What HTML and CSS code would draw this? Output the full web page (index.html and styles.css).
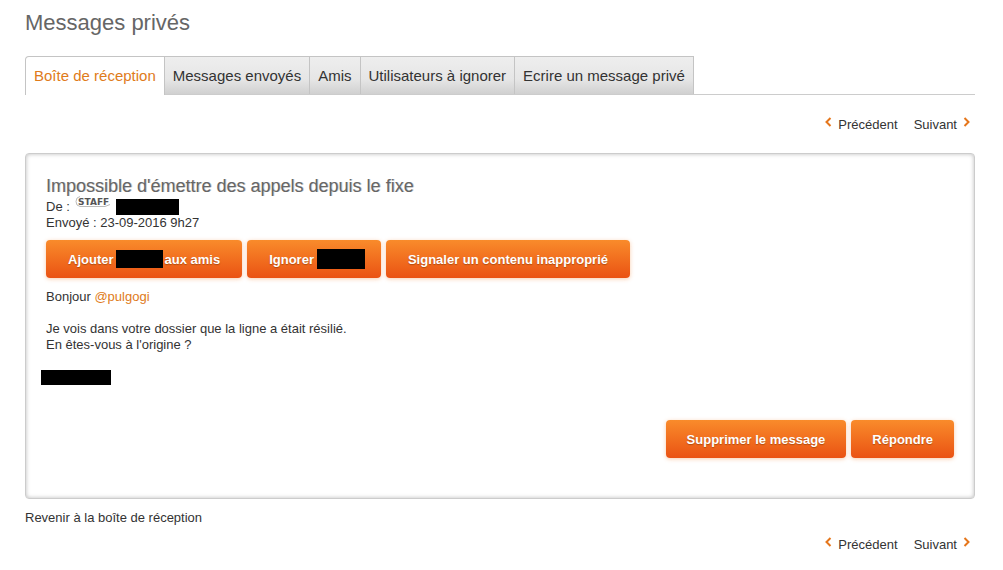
FILE: index.html
```html
<!DOCTYPE html>
<html lang="fr">

<head>
    <meta charset="UTF-8">
    <meta name="viewport" content="width=device-width, initial-scale=1.0">
    <title>Messages privés</title>
    <link rel="stylesheet" href="styles.css">
</head>

<body>
    <h1>Messages privés</h1>
    <nav class="tabs">
        <a class="tab active" href="#inbox">Boîte de réception</a>
        <a class="tab" href="#sent">Messages envoyés</a>
        <a class="tab" href="#friends">Amis</a>
        <a class="tab" href="#ignored">Utilisateurs à ignorer</a>
        <a class="tab" href="#compose">Ecrire un message privé</a>
    </nav>

    <div class="pager">
        <a href="#previous">
            <svg class="chevron" viewBox="0 0 8 10"><path d="M6.500 1 2.500 5l4 4" /></svg>
            Précédent
        </a>
        <a href="#next">
            Suivant
            <svg class="chevron" viewBox="0 0 8 10"><path d="m1.500 1 4 4-4 4" /></svg>
        </a>
    </div>

    <main class="message">
        <h2>Impossible d'émettre des appels depuis le fixe</h2>
        <div class="meta author">
            <span>De :</span>
            <svg class="staff" viewBox="0 0 36 14">
                <path class="staff-outline" d="M5 1.500Q1 2 1 6.500T5 11.500H30L35 9.500" />
                <text x="3" y="10">STAFF</text>
            </svg>
            <span class="mask mask-author"></span>
        </div>
        <div class="meta">Envoyé : 23-09-2016 9h27</div>

        <div class="actions">
            <button type="button">Ajouter<span class="mask mask-friend"></span>aux amis</button>
            <button type="button" class="ignore">Ignorer<span class="mask mask-ignore"></span></button>
            <button type="button">Signaler un contenu inapproprié</button>
        </div>

        <div class="content">
            <p>Bonjour <a href="#pulgogi">@pulgogi</a></p>
            <p>Je vois dans votre dossier que la ligne a était résilié.<br>En êtes-vous à l'origine ?</p>
            <span class="mask mask-signature"></span>
        </div>

        <div class="actions reply">
            <button type="button">Supprimer le message</button>
            <button type="button">Répondre</button>
        </div>
    </main>

    <a class="back" href="#inbox">Revenir à la boîte de réception</a>

    <div class="pager pager-bottom">
        <a href="#previous">
            <svg class="chevron" viewBox="0 0 8 10"><path d="M6.500 1 2.500 5l4 4" /></svg>
            Précédent
        </a>
        <a href="#next">
            Suivant
            <svg class="chevron" viewBox="0 0 8 10"><path d="m1.500 1 4 4-4 4" /></svg>
        </a>
    </div>
</body>

</html>
```
FILE: styles.css
```css
* {
    box-sizing: border-box;
}

body {
    margin: 0;
    padding: 8px 28px 8px 25px;
    background: #fff;
    color: #333;
    font-family: "Liberation Sans", Arial, sans-serif;
    font-size: 13px;
    line-height: 16px;
}

a {
    color: #333;
    text-decoration: none;
}

h1 {
    margin: 0 0 18px;
    color: #666;
    font-size: 22px;
    font-weight: normal;
    line-height: 30px;
}

.tabs {
    display: flex;
    border-bottom: 1px solid #ccc;
}

.tab {
    padding: 9px 8px 8px;
    border: 1px solid #c4c4c4;
    border-left-width: 0;
    border-bottom: 0;
    background: linear-gradient(#eee, #e6e6e6 60%, #d0d0d0);
    font-size: 15px;
    line-height: 20px;
}

.tab.active {
    margin-bottom: -1px;
    border-left-width: 1px;
    border-top-left-radius: 4px;
    background: #fff;
    color: #e07b1a;
}

.pager {
    display: flex;
    justify-content: flex-end;
    gap: 16px;
    padding: 22px 4px 20px;
}

.pager a {
    display: flex;
    gap: 6px;
}

.chevron {
    width: 8px;
    height: 10px;
    fill: none;
    stroke: #e5761b;
    stroke-width: 2;
}

.message {
    padding: 20px 20px 40px;
    border: 1px solid #ccc;
    border-radius: 4px;
    box-shadow: inset 0 0 4px #bbb;
}

h2 {
    margin: 0;
    color: #666;
    font-size: 18px;
    font-weight: normal;
    line-height: 25px;
    text-shadow: 1px 0 rgba(102, 102, 102, 0.3);
}

.author {
    display: flex;
    align-items: center;
    gap: 5px;
}

.staff {
    width: 36px;
    height: 14px;
    margin-top: -10px;
}

.staff-outline {
    fill: none;
    stroke: #bbb;
}

.staff text {
    fill: #555;
    font-family: "DejaVu Sans", sans-serif;
    font-size: 9px;
    font-weight: bold;
}

.mask {
    display: inline-block;
    background: #000;
}

.mask-author {
    width: 63px;
    height: 16px;
}

.mask-friend {
    width: 47px;
    height: 18px;
    margin: 0 2px;
}

.mask-ignore {
    width: 48px;
    height: 20px;
    margin-left: 3px;
}

.mask-signature {
    display: block;
    width: 70px;
    height: 15px;
    margin: 17px 0 0 -5px;
}

.actions {
    display: flex;
    gap: 5px;
    margin-top: 9px;
}

button {
    display: flex;
    align-items: center;
    height: 38px;
    padding: 0 22px;
    border: 0;
    border-radius: 4px;
    background: linear-gradient(#f98b2b, #ea5213);
    box-shadow: 0 1px 4px rgba(240, 130, 50, 0.4);
    color: #fff;
    cursor: pointer;
    font: bold 13px "Liberation Sans", Arial, sans-serif;
    text-shadow: 0 1px 1px rgba(120, 50, 0, 0.5);
}

.ignore {
    padding-right: 16px;
}

.content {
    padding-top: 11px;
}

p {
    margin: 0 0 16px;
}

p a {
    color: #e07b1a;
}

.reply {
    justify-content: flex-end;
    margin-top: 35px;
}

.reply button {
    padding: 0 21px;
}

.back {
    display: block;
    margin-top: 11px;
}

.pager-bottom {
    padding: 11px 4px 0;
}
```
